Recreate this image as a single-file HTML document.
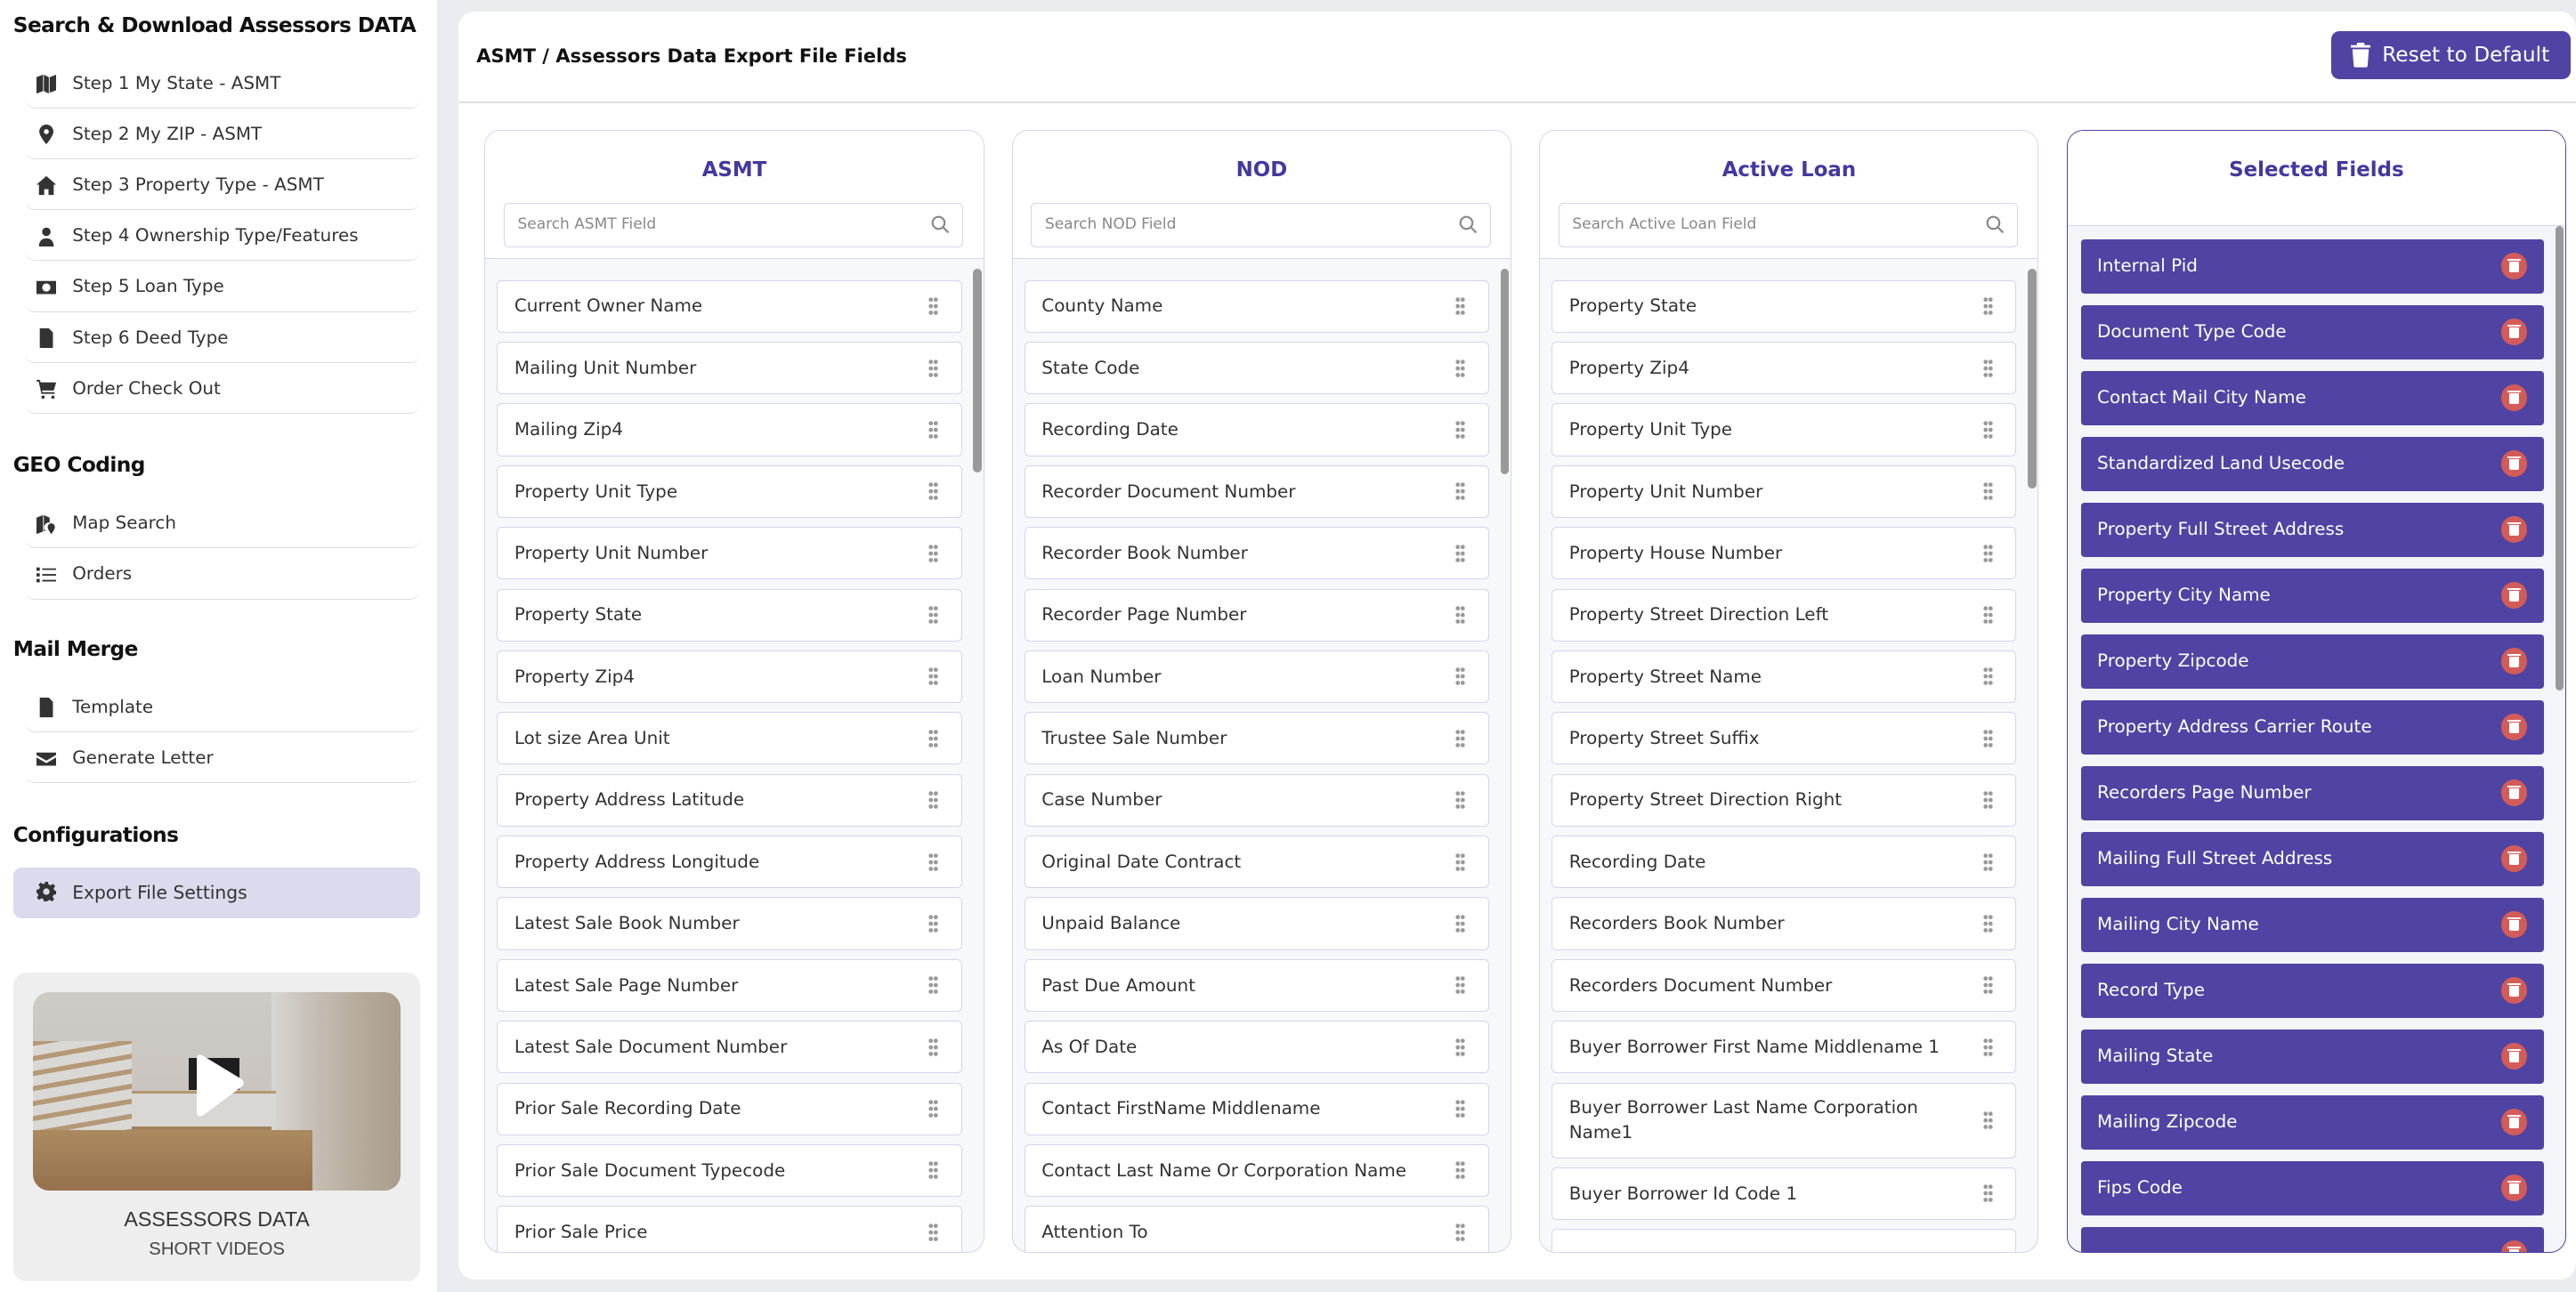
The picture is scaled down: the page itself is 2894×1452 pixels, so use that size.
<!DOCTYPE html>
<html><head><meta charset="utf-8"><style>
*{box-sizing:border-box;margin:0;padding:0}
html,body{width:2894px;height:1452px;overflow:hidden;background:#ebecef}
#w{zoom:1.84566;width:1568px;height:787px;position:relative;font-family:"DejaVu Sans","Liberation Sans",sans-serif;color:#333}
.abs{position:absolute}
#side{left:0;top:0;width:266px;height:787px;background:#fff}
.h{position:absolute;left:8px;font-size:12.6px;font-weight:600;color:#111;font-family:"DejaVu Sans",sans-serif;letter-spacing:-0.3px}
.si{position:absolute;left:15px;width:241px;height:31px;border-bottom:1px solid #ddd;border-radius:0 0 6px 6px;font-size:10.8px;color:#333;line-height:31px;padding-left:29px}
.si svg{position:absolute;left:7px;top:10px;width:12px;height:12px;fill:#333}
#main{left:279px;top:7px;width:1289px;height:772px;background:#fff;border-radius:10px}
#ttl{left:11px;top:20px;font-size:11.4px;font-weight:bold;color:#111}
#rst{left:1140px;top:12px;width:146px;height:29px;background:#4f44a3;border-radius:5px;color:#fff;font-size:12.6px;line-height:29px;padding-left:31px}
#rst svg{position:absolute;left:12px;top:7px;width:12px;height:15px;fill:#fff}
.col{position:absolute;top:72px;width:304px;height:684px;border:1px solid #d6d3f0;border-radius:10px;overflow:hidden;background:#f7f8fa}
.col .hd{position:absolute;left:0;top:0;right:0;height:78px;background:#fff;border-bottom:1px solid #d6d3f0}
.col .t{position:absolute;left:0;right:0;top:17px;text-align:center;color:#4338a0;font-weight:bold;font-size:12.4px}
.col .sr{position:absolute;left:11px;right:12px;top:44px;height:27px;border:1px solid #d6d3f0;border-radius:3px;font-size:9.2px;color:#888;line-height:26px;padding-left:8px}
.sr svg{position:absolute;right:8px;top:7px;width:11px;height:11px}
.ls{position:absolute;left:7px;right:13px;top:91px}
.it{height:32px;margin-bottom:5.6px;background:#fff;border:1px solid #d6d3f0;border-radius:3px;position:relative;font-size:10.8px;color:#333;padding:0 40px 0 10px;display:flex;align-items:center;line-height:15px}
.it.tw{height:46px}
.dr{position:absolute;right:14px;top:50%;margin-top:-6px;width:6px;height:12px;background:radial-gradient(circle,#999 1.2px,transparent 1.4px) 0 0/3px 4px}
.sb{position:absolute;right:1px;width:5px;background:#999;border-radius:3px}
.sel{border-color:#4f44a3;background:#f4f5f9}
.sel .hd{height:58px}
.sel .ls{top:66px;left:8px;right:13px}
.sel .it{height:33px;margin-bottom:7.1px;background:#4f44a3;border:none;color:#fff;border-radius:2px}
.tr{position:absolute;right:10px;top:50%;margin-top:-8px;width:16px;height:16px;border-radius:50%;background:#d35c58}
.tr:before{content:"";position:absolute;left:5px;top:5px;width:6px;height:7px;background:#fff;border-radius:0 0 1px 1px}
.tr:after{content:"";position:absolute;left:4px;top:3.5px;width:8px;height:1.2px;background:#fff}
#vid{left:8px;top:592px;width:248px;height:188px;background:#eee;border-radius:8px}
#img{position:absolute;left:12px;top:12px;width:224px;height:121px;border-radius:10px;overflow:hidden;background:linear-gradient(180deg,#e6e2dd 0%,#e0dbd5 52%,#b8946a 58%,#a8845c 100%)}
</style></head><body><div id="w">
<div id="side" class="abs">
<div class="h" style="top:8px">Search &amp; Download Assessors DATA</div>
<div class="si" style="top:35px"><svg viewBox="0 0 12 12"><path d="M0 2l4-1.5v10L0 12zM4.5.5l3 1.5v10l-3-1.5zM8 2l4-1.5V10L8 11.5z"/></svg>Step 1 My State - ASMT</div>
<div class="si" style="top:66px"><svg viewBox="0 0 12 12"><path d="M6 0a4.3 4.3 0 014.3 4.3C10.3 7 6 12 6 12S1.7 7 1.7 4.3A4.3 4.3 0 016 0zm0 2.8a1.5 1.5 0 100 3 1.5 1.5 0 000-3z"/></svg>Step 2 My ZIP - ASMT</div>
<div class="si" style="top:97px"><svg viewBox="0 0 12 12"><path d="M6 .5l6 5.2h-1.5V12H7.3V8.5H4.7V12H1.5V5.7H0z"/></svg>Step 3 Property Type - ASMT</div>
<div class="si" style="top:128px"><svg viewBox="0 0 12 12"><circle cx="6" cy="3" r="2.6"/><path d="M1.5 12c0-3 1.5-5 4.5-5s4.5 2 4.5 5z"/></svg>Step 4 Ownership Type/Features</div>
<div class="si" style="top:159px"><svg viewBox="0 0 12 12"><path d="M0 2h12v8H0zm6 1.5a2.5 2.5 0 100 5 2.5 2.5 0 000-5z"/></svg>Step 5 Loan Type</div>
<div class="si" style="top:190px"><svg viewBox="0 0 12 12"><path d="M2 0h5.5L10 2.5V12H2z"/></svg>Step 6 Deed Type</div>
<div class="si" style="top:221px"><svg viewBox="0 0 12 12"><path d="M0 .5h2l.5 1.5H12l-1.5 5H3.3L3.7 8H11v1H3L1.3 1.5H0z"/><circle cx="4" cy="11" r="1"/><circle cx="10" cy="11" r="1"/></svg>Order Check Out</div>
<div class="h" style="top:276px">GEO Coding</div>
<div class="si" style="top:303px"><svg viewBox="0 0 12 12"><path d="M0 2l4-1.5v10L0 12zM4.5.5L8 2v3a3 3 0 00-2 5.5L4.5 10z"/><path d="M9 5.5a2.2 2.2 0 012.2 2.2C11.2 9.3 9 12 9 12S6.8 9.3 6.8 7.7A2.2 2.2 0 019 5.5z"/></svg>Map Search</div>
<div class="si" style="top:334px"><svg viewBox="0 0 12 12"><path d="M0 1.5h2v2H0zm0 3.5h2v2H0zm0 3.5h2v2H0zM3.5 2h8.5v1H3.5zm0 3.5h8.5v1H3.5zm0 3.5h8.5v1H3.5z"/></svg>Orders</div>
<div class="h" style="top:388px">Mail Merge</div>
<div class="si" style="top:415px"><svg viewBox="0 0 12 12"><path d="M2 0h5.5L10 2.5V12H2zM4 7h4v1H4zm0 2h4v1H4z"/></svg>Template</div>
<div class="si" style="top:446px"><svg viewBox="0 0 12 12"><path d="M0 2h12v1.5L6 7 0 3.5zm0 3l6 3.5L12 5v5H0z"/></svg>Generate Letter</div>
<div class="h" style="top:501px">Configurations</div>
<div class="si" style="top:528px;left:8px;width:248px;background:#dcdaed;border:none;border-radius:5px;padding-left:36px;font-size:11px;line-height:31px"><svg style="left:14px;top:9px" viewBox="0 0 12 12"><path d="M5 0h2l.3 1.6 1.3.6L10 1.2l1.4 1.4-1 1.4.6 1.3L12 5.6v2l-1.6.3-.6 1.3 1 1.4L9.4 12 8 11l-1.3.6L6.5 12h-2l-.3-1.4L3 10l-1.4 1L.2 9.6l1-1.4L.6 7 0 6.8v-2l1.6-.3.6-1.3-1-1.4L2.6.4 4 1.4l1.3-.6zM6 4a2 2 0 100 4 2 2 0 000-4z"/></svg>Export File Settings</div>
<div id="vid" class="abs"><div id="img">
<div class="abs" style="left:0;top:30px;width:60px;height:60px;background:repeating-linear-gradient(170deg,#c9ab84 0 3px,#f3f1ee 3px 9px)"></div>
<div class="abs" style="left:145px;top:0;width:79px;height:121px;background:linear-gradient(90deg,#f0eeeb,#ddd4ca,#cbbfae,#bfb09c)"></div>
<div class="abs" style="left:60px;top:60px;width:88px;height:22px;background:#f2f0ed;border-top:2px solid #c9a97c"></div>
<div class="abs" style="left:95px;top:40px;width:31px;height:20px;background:#222"></div>
<div class="abs" style="left:0;top:84px;width:170px;height:37px;background:linear-gradient(180deg,#c09a6c,#a67f55)"></div>
<div class="abs" style="left:0;top:0;width:224px;height:121px;background:rgba(0,0,0,.1)"></div>
<svg class="abs" style="left:94px;top:37px" width="36" height="40" viewBox="0 0 36 40"><path d="M6 4Q6 0 10 2l23 14q3 2.5 0 5L10 38q-4 2-4-2z" fill="#fff"/></svg>
</div>
<div class="abs" style="left:0;right:0;top:143px;text-align:center;font-size:12.6px;color:#333;font-family:'Liberation Sans',sans-serif">ASSESSORS DATA</div>
<div class="abs" style="left:0;right:0;top:163px;text-align:center;font-size:11px;color:#444;font-family:'Liberation Sans',sans-serif">SHORT VIDEOS</div>
</div>
</div>

<div id="main" class="abs">
<div id="ttl" class="abs">ASMT / Assessors Data Export File Fields</div>
<div id="rst" class="abs"><svg viewBox="0 0 12 15"><path d="M4 0h4l.5 1.5H12V3H0V1.5h3.5zM1 4h10l-.8 10.2q-.1.8-1 .8H2.8q-.9 0-1-.8z"/></svg>Reset to Default</div>
<div class="abs" style="left:0;right:0;top:55px;height:1px;background:#ddd"></div>

<div class="col" style="left:16px">
<div class="hd"><div class="t">ASMT</div><div class="sr">Search ASMT Field<svg viewBox="0 0 12 12" fill="none" stroke="#888" stroke-width="1.3"><circle cx="5" cy="5" r="4"/><path d="M8 8l3.5 3.5"/></svg></div></div>
<div class="ls">
<div class="it">Current Owner Name<i class="dr"></i></div><div class="it">Mailing Unit Number<i class="dr"></i></div><div class="it">Mailing Zip4<i class="dr"></i></div><div class="it">Property Unit Type<i class="dr"></i></div><div class="it">Property Unit Number<i class="dr"></i></div><div class="it">Property State<i class="dr"></i></div><div class="it">Property Zip4<i class="dr"></i></div><div class="it">Lot size Area Unit<i class="dr"></i></div><div class="it">Property Address Latitude<i class="dr"></i></div><div class="it">Property Address Longitude<i class="dr"></i></div><div class="it">Latest Sale Book Number<i class="dr"></i></div><div class="it">Latest Sale Page Number<i class="dr"></i></div><div class="it">Latest Sale Document Number<i class="dr"></i></div><div class="it">Prior Sale Recording Date<i class="dr"></i></div><div class="it">Prior Sale Document Typecode<i class="dr"></i></div><div class="it">Prior Sale Price<i class="dr"></i></div>
</div><div class="sb" style="top:84px;height:124px"></div>
</div>

<div class="col" style="left:337px">
<div class="hd"><div class="t">NOD</div><div class="sr">Search NOD Field<svg viewBox="0 0 12 12" fill="none" stroke="#888" stroke-width="1.3"><circle cx="5" cy="5" r="4"/><path d="M8 8l3.5 3.5"/></svg></div></div>
<div class="ls">
<div class="it">County Name<i class="dr"></i></div><div class="it">State Code<i class="dr"></i></div><div class="it">Recording Date<i class="dr"></i></div><div class="it">Recorder Document Number<i class="dr"></i></div><div class="it">Recorder Book Number<i class="dr"></i></div><div class="it">Recorder Page Number<i class="dr"></i></div><div class="it">Loan Number<i class="dr"></i></div><div class="it">Trustee Sale Number<i class="dr"></i></div><div class="it">Case Number<i class="dr"></i></div><div class="it">Original Date Contract<i class="dr"></i></div><div class="it">Unpaid Balance<i class="dr"></i></div><div class="it">Past Due Amount<i class="dr"></i></div><div class="it">As Of Date<i class="dr"></i></div><div class="it">Contact FirstName Middlename<i class="dr"></i></div><div class="it">Contact Last Name Or Corporation Name<i class="dr"></i></div><div class="it">Attention To<i class="dr"></i></div>
</div><div class="sb" style="top:84px;height:125px"></div>
</div>

<div class="col" style="left:658px">
<div class="hd"><div class="t">Active Loan</div><div class="sr">Search Active Loan Field<svg viewBox="0 0 12 12" fill="none" stroke="#888" stroke-width="1.3"><circle cx="5" cy="5" r="4"/><path d="M8 8l3.5 3.5"/></svg></div></div>
<div class="ls">
<div class="it">Property State<i class="dr"></i></div><div class="it">Property Zip4<i class="dr"></i></div><div class="it">Property Unit Type<i class="dr"></i></div><div class="it">Property Unit Number<i class="dr"></i></div><div class="it">Property House Number<i class="dr"></i></div><div class="it">Property Street Direction Left<i class="dr"></i></div><div class="it">Property Street Name<i class="dr"></i></div><div class="it">Property Street Suffix<i class="dr"></i></div><div class="it">Property Street Direction Right<i class="dr"></i></div><div class="it">Recording Date<i class="dr"></i></div><div class="it">Recorders Book Number<i class="dr"></i></div><div class="it">Recorders Document Number<i class="dr"></i></div><div class="it">Buyer Borrower First Name Middlename 1<i class="dr"></i></div><div class="it tw">Buyer Borrower Last Name Corporation Name1<i class="dr"></i></div><div class="it">Buyer Borrower Id Code 1<i class="dr"></i></div><div class="it"></div>
</div><div class="sb" style="top:84px;height:134px"></div>
</div>

<div class="col sel" style="left:979px">
<div class="hd"><div class="t">Selected Fields</div></div>
<div class="ls">
<div class="it">Internal Pid<i class="tr"></i></div><div class="it">Document Type Code<i class="tr"></i></div><div class="it">Contact Mail City Name<i class="tr"></i></div><div class="it">Standardized Land Usecode<i class="tr"></i></div><div class="it">Property Full Street Address<i class="tr"></i></div><div class="it">Property City Name<i class="tr"></i></div><div class="it">Property Zipcode<i class="tr"></i></div><div class="it">Property Address Carrier Route<i class="tr"></i></div><div class="it">Recorders Page Number<i class="tr"></i></div><div class="it">Mailing Full Street Address<i class="tr"></i></div><div class="it">Mailing City Name<i class="tr"></i></div><div class="it">Record Type<i class="tr"></i></div><div class="it">Mailing State<i class="tr"></i></div><div class="it">Mailing Zipcode<i class="tr"></i></div><div class="it">Fips Code<i class="tr"></i></div><div class="it"><i class="tr"></i></div>
</div><div class="sb" style="top:58px;height:283px"></div>
</div>
</div>
</div></body></html>
